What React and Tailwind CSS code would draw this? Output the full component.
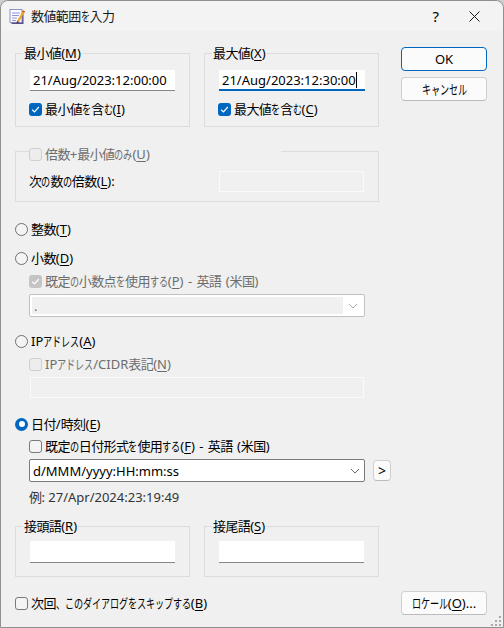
import React from "react";

const U = ({ children }) => <span className="underline underline-offset-2 decoration-1">{children}</span>;

// Windows UI font has narrow kana and slightly narrow kanji: set them cell by cell.
function T({ children }) {
  const parts = String(children).match(/[\u3000-\u30ff]|[\u4e00-\u9fff]+|[^\u3000-\u30ff\u4e00-\u9fff]+/g) || [];
  return (
    <>
      {parts.map((p, i) =>
        /[\u3000-\u30ff]/.test(p) ? (
          <span key={i} className="inline-block w-[9px]">
            <span className="inline-block origin-left scale-x-[0.7]">{p}</span>
          </span>
        ) : /[\u4e00-\u9fff]/.test(p) ? (
          <span key={i} className="tracking-[-0.6px]">{p}</span>
        ) : (
          <span key={i}>{p}</span>
        )
      )}
    </>
  );
}

function Check({ checked, disabled, children, className = "" }) {
  const box = checked
    ? disabled
      ? "bg-[#c4c4c4]"
      : "bg-[#0067c0]"
    : disabled
    ? "bg-[#ededed] border border-[#cfcfcf]"
    : "bg-[#f4f4f4] border border-[#7a7a7a]";
  return (
    <div className={`flex items-center h-4 ${disabled ? "text-[#6d6d6d]" : "text-black"} ${className}`}>
      <div className={`w-[13px] h-[13px] rounded-[3px] flex items-center justify-center shrink-0 ${box}`}>
        {checked && (
          <svg width="9" height="9" viewBox="0 0 9 9" fill="none">
            <path d="M1.2 4.8 L3.5 7 L7.8 2" stroke="white" strokeWidth="1.2" />
          </svg>
        )}
      </div>
      <span className="ml-[3px] whitespace-nowrap">{children}</span>
    </div>
  );
}

function Radio({ checked, children, className = "" }) {
  return (
    <div className={`flex items-center h-4 text-black ${className}`}>
      {checked ? (
        <div className="w-[13px] h-[13px] rounded-full bg-[#0067c0] flex items-center justify-center shrink-0">
          <div className="w-[6px] h-[6px] rounded-full bg-white" />
        </div>
      ) : (
        <div className="w-[13px] h-[13px] rounded-full border border-[#6f6f6f] bg-[#f4f4f4] shrink-0" />
      )}
      <span className="ml-[3px] whitespace-nowrap">{children}</span>
    </div>
  );
}

function Group({ label, className = "", children }) {
  return (
    <div className={`relative border border-[#dcdcdc] ${className}`}>
      {label && (
        <div className="absolute left-[7px] top-[-9px] bg-[#f0f0f0] px-px h-4 flex items-center whitespace-nowrap">{label}</div>
      )}
      {children}
    </div>
  );
}

function TextField({ value, active, className = "", caret }) {
  return (
    <div
      className={`h-[21px] bg-white flex items-center pl-[3px] text-black whitespace-nowrap ${
        active ? "border-b-2 border-[#0067c0]" : "border-b border-[#868686]"
      } ${className}`}
    >
      <span>{value}</span>
      {caret && <span className="w-px h-4 bg-black" />}
    </div>
  );
}

function Chevron({ color }) {
  return (
    <svg width="10" height="6" viewBox="0 0 10 6" fill="none">
      <path d="M1 1 L5 5 L9 1" stroke={color} strokeWidth="1" />
    </svg>
  );
}

function Btn({ children, primary, className = "" }) {
  return (
    <div
      className={`bg-[#fbfbfb] rounded-[4px] flex items-center justify-center text-black whitespace-nowrap ${
        primary ? "border border-[#0067c0]" : "border border-[#d0d0d0] border-b-[#bcbcbc]"
      } ${className}`}
    >
      {children}
    </div>
  );
}

export default function App() {
  return (
    <div
      className="w-[504px] h-[628px] bg-[#cfcfcf] text-[13px] leading-4 overflow-hidden"
      style={{ fontFamily: '"Noto Sans", "Noto Sans CJK JP", sans-serif' }}
    >
      <div className="h-full rounded-t-[8px] border-x border-b border-t border-[#8f8f8f] bg-[#f0f0f0] flex flex-col">
        {/* Title bar */}
        <div className="h-[30px] bg-[#f3f3f3] flex items-center shrink-0 rounded-t-[8px]">
          <svg className="ml-[8px]" width="17" height="17" viewBox="0 0 17 17">
            <rect x="2.5" y="3" width="12" height="13" fill="#55508f" />
            <rect x="1" y="1.5" width="12" height="13" fill="#fbfbff" stroke="#7a78b0" strokeWidth="0.8" />
            <path d="M3 5h8M3 7.5h7M3 10h5M3 12.5h4" stroke="#8f95d8" strokeWidth="1" />
            <path d="M8 13 L14 2.5 L16 3.6 L10 14 Z" fill="#e9a52c" />
            <path d="M13.4 3.5 L14 2.5 L16 3.6 L15.4 4.6 Z" fill="#c9352b" />
            <path d="M8 13 L7.6 15.4 L10 14 Z" fill="#3a2a2a" />
          </svg>
          <span className="ml-[5px] text-[#1a1a1a] whitespace-nowrap"><T>数値範囲を入力</T></span>
          <div className="ml-auto flex items-center">
            <span className="text-[15px] text-black mr-[30px]">?</span>
            <svg className="mr-[23px]" width="11" height="11" viewBox="0 0 11 11" fill="none">
              <path d="M0.5 0.5 L10.5 10.5 M10.5 0.5 L0.5 10.5" stroke="#1a1a1a" strokeWidth="1" />
            </svg>
          </div>
        </div>

        {/* Body */}
        <div className="flex-1 flex flex-col pl-[14px] pr-4">
          <div className="flex">
            <div className="w-[364px] shrink-0 flex flex-col pt-[22px]">
              <div className="flex justify-between">
                <Group label={<><T>最小値</T>(<U>M</U>)</>} className="w-[175px] h-[74px] pl-[14px] pt-4">
                  <TextField value="21/Aug/2023:12:00:00" className="w-[145px]" />
                  <Check checked className="mt-[10px] -ml-px"><T>最小値を含む</T>(<U>I</U>)</Check>
                </Group>
                <Group label={<><T>最大値</T>(<U>X</U>)</>} className="w-[175px] h-[74px] pl-[14px] pt-4">
                  <TextField value="21/Aug/2023:12:30:00" active caret className="w-[146px]" />
                  <Check checked className="mt-[10px] -ml-px"><T>最大値を含む</T>(<U>C</U>)</Check>
                </Group>
              </div>

              <Group className="mt-6 h-[51px] pl-[13px] pr-[14px] pt-[19px]">
                <div className="absolute left-[13px] top-[-6px] w-[252px] bg-[#f0f0f0]">
                  <Check disabled><T>倍数+最小値のみ</T>(<U>U</U>)</Check>
                </div>
                <div className="flex justify-between items-center h-[21px]">
                  <span className="text-black whitespace-nowrap pb-[2px]"><T>次の数の倍数</T>(<U>L</U>):</span>
                  <div className="w-[145px] h-[21px] bg-[#f0f0f0] border border-[#fafafa]" />
                </div>
              </Group>

              <Radio className="mt-[19px]"><T>整数</T>(<U>T</U>)</Radio>
              <Radio className="mt-[13px]"><T>小数</T>(<U>D</U>)</Radio>
              <div className="px-[14px] flex flex-col">
                <Check checked disabled className="mt-[7px] [word-spacing:1px]"><T>既定の小数点を使用する</T>(<U>P</U>) - <T>英語</T> (<T>米国</T>)</Check>
                <div className="mt-[5px] h-[23px] border border-[#c2c2c2] rounded-[2px] bg-white p-[2px] flex">
                  <div className="flex-1 bg-[#f0f0f0] pl-[2px] text-[#6d6d6d] flex items-center">.</div>
                  <div className="w-[19px] flex items-center justify-center">
                    <Chevron color="#a8a8a8" />
                  </div>
                </div>
              </div>

              <Radio className="mt-4">IP<T>アドレス</T>(<U>A</U>)</Radio>
              <div className="px-[14px] flex flex-col">
                <Check disabled className="mt-[7px]">IP<T>アドレス</T>/CIDR<T>表記</T>(<U>N</U>)</Check>
                <div className="mt-[5px] mx-px h-[21px] bg-[#f0f0f0] border border-[#fafafa]" />
              </div>

              <Radio checked className="mt-[18px]"><T>日付</T>/<T>時刻</T>(<U>E</U>)</Radio>
              <div className="px-[14px] flex flex-col">
                <Check className="mt-[6px] [word-spacing:1px]"><T>既定の日付形式を使用する</T>(<U>F</U>) - <T>英語</T> (<T>米国</T>)</Check>
                <div className="relative mt-[5px] h-[23px]">
                  <div className="h-[23px] border border-[#7a7a7a] rounded-[2px] bg-white flex items-center pl-[3px] pr-[4px] justify-between text-black">
                    <span>d/MMM/yyyy:HH:mm:ss</span>
                    <Chevron color="#6a6a6a" />
                  </div>
                  <Btn className="absolute left-[344px] top-px w-[18px] h-[21px] text-[14px]">&gt;</Btn>
                </div>
                <div className="mt-[7px] h-4 text-[#333] flex items-center whitespace-nowrap"><T>例</T>: 27/Apr/2024:23:19:49</div>
              </div>

              <div className="flex justify-between mt-[21px]">
                <Group label={<><T>接頭語</T>(<U>R</U>)</>} className="w-[175px] h-[51px] pl-[14px] pt-[14px]">
                  <TextField value="" className="w-[145px] h-[22px]" />
                </Group>
                <Group label={<><T>接尾語</T>(<U>S</U>)</>} className="w-[175px] h-[51px] pl-[14px] pt-[14px]">
                  <TextField value="" className="w-[145px] h-[22px]" />
                </Group>
              </div>
            </div>

            <div className="ml-[22px] w-[86px] shrink-0 flex flex-col pt-4">
              <Btn primary className="h-6">OK</Btn>
              <Btn className="h-6 mt-[6px]"><T>キャンセル</T></Btn>
            </div>
          </div>

          <div className="flex items-center justify-between mt-[14px]">
            <Check><T>次回、このダイアログをスキップする</T>(<U>B</U>)</Check>
            <Btn className="w-[86px] h-6"><T>ロケール</T>(<U>O</U>)...</Btn>
          </div>

          <div className="relative">
            <svg className="absolute right-[-16px] top-[1px]" width="12" height="12" viewBox="0 0 12 12" fill="#a9a9a9">
              <rect x="8" y="0" width="2" height="2" />
              <rect x="4" y="4" width="2" height="2" />
              <rect x="8" y="4" width="2" height="2" />
              <rect x="0" y="8" width="2" height="2" />
              <rect x="4" y="8" width="2" height="2" />
              <rect x="8" y="8" width="2" height="2" />
            </svg>
          </div>
        </div>
      </div>
    </div>
  );
}
